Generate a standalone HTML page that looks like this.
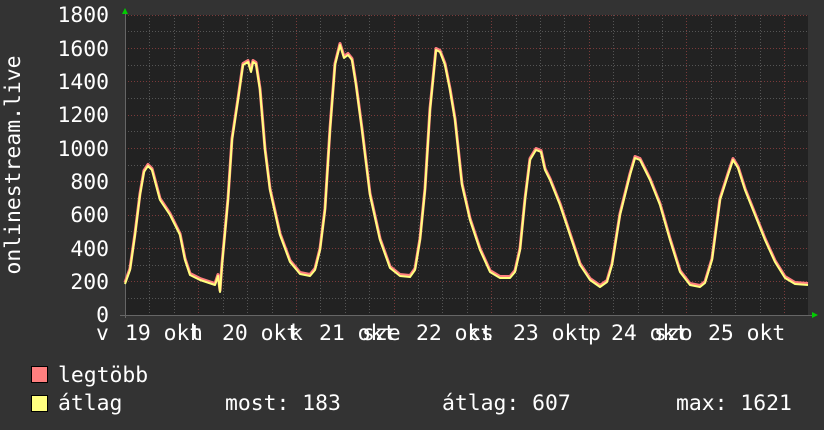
<!DOCTYPE html>
<html><head><meta charset="utf-8"><style>html,body{margin:0;padding:0;background:#333}svg{display:block}text{font-family:"DejaVu Sans Mono","Liberation Mono",monospace;fill:#fff;font-size:21.4px}</style></head><body>
<svg width="824" height="430" viewBox="0 0 824 430" xmlns="http://www.w3.org/2000/svg">
<rect width="824" height="430" fill="#333"/>
<rect x="125" y="15" width="683" height="300" fill="#222"/>
<g stroke-width="1" stroke-dasharray="1,2">
<g stroke="#555">
<path d="M125 31.5H808M125 65.5H808M125 98.5H808M125 131.5H808M125 165.5H808M125 198.5H808M125 231.5H808M125 265.5H808M125 298.5H808"/>
<path d="M149.5 15V315M174.5 15V315M223.5 15V315M247.5 15V315M272.5 15V315M320.5 15V315M345.5 15V315M369.5 15V315M418.5 15V315M442.5 15V315M467.5 15V315M516.5 15V315M540.5 15V315M564.5 15V315M613.5 15V315M638.5 15V315M662.5 15V315M711.5 15V315M735.5 15V315M760.5 15V315"/>
</g>
<g stroke="#7a3a3a">
<path d="M125 15.5H808M125 48.5H808M125 81.5H808M125 115.5H808M125 148.5H808M125 181.5H808M125 215.5H808M125 248.5H808M125 281.5H808"/>
<path d="M198.5 15V315M296.5 15V315M394.5 15V315M491.5 15V315M589.5 15V315M686.5 15V315M784.5 15V315"/>
</g>
</g>
<path d="M120 315.5H812" stroke="#666"/>
<path d="M125.5 12V318" stroke="#666"/>
<polygon points="122,14 128,14 125,8" fill="#0c0"/>
<polygon points="812,312 812,318 818,315" fill="#0c0"/>
<g fill="none" stroke-linejoin="round">
<polyline stroke="#ff7f7f" stroke-width="3" transform="translate(0,-1.5)" points="125,284 130,270 135,235 140,195 144,172 148,166 152,170 156,185 160,200 170,215 180,235 185,260 190,275 200,280 215,285 218,276 220,292 222,265 228,200 232,140 238,100 243,65 248,62 251,72 253,62 256,64 260,90 265,150 270,190 280,235 290,262 300,274 310,276 315,270 320,250 325,210 330,130 335,65 340,45 344,58 348,55 352,60 356,85 362,130 370,195 380,240 390,268 400,276 410,277 415,270 420,240 425,190 430,110 436,50 440,52 445,65 450,90 455,120 462,185 470,220 480,250 490,272 500,278 510,278 515,272 520,250 525,200 530,160 536,150 541,152 545,170 550,180 560,205 570,235 580,265 590,280 600,287 607,282 612,265 620,215 630,175 635,158 640,160 650,180 660,205 670,240 680,272 690,285 700,287 705,283 712,260 720,200 728,175 733,160 738,168 745,190 755,215 765,240 775,262 785,278 795,284 808,285"/>
<polyline stroke="#ffff7f" stroke-width="2" points="125,284 130,270 135,235 140,195 144,172 148,166 152,170 156,185 160,200 170,215 180,235 185,260 190,275 200,280 215,285 218,276 220,292 222,265 228,200 232,140 238,100 243,65 248,62 251,72 253,62 256,64 260,90 265,150 270,190 280,235 290,262 300,274 310,276 315,270 320,250 325,210 330,130 335,65 340,45 344,58 348,55 352,60 356,85 362,130 370,195 380,240 390,268 400,276 410,277 415,270 420,240 425,190 430,110 436,50 440,52 445,65 450,90 455,120 462,185 470,220 480,250 490,272 500,278 510,278 515,272 520,250 525,200 530,160 536,150 541,152 545,170 550,180 560,205 570,235 580,265 590,280 600,287 607,282 612,265 620,215 630,175 635,158 640,160 650,180 660,205 670,240 680,272 690,285 700,287 705,283 712,260 720,200 728,175 733,160 738,168 745,190 755,215 765,240 775,262 785,278 795,284 808,285"/>
</g>
<g text-anchor="end">
<text x="109" y="22">1800</text><text x="109" y="56">1600</text><text x="109" y="89">1400</text><text x="109" y="122">1200</text><text x="109" y="156">1000</text><text x="109" y="189">800</text><text x="109" y="222">600</text><text x="109" y="256">400</text><text x="109" y="289">200</text><text x="109" y="322">0</text>
</g>
<text transform="translate(20,165) rotate(-90)" text-anchor="middle">onlinestream.live</text>
<g>
<text x="96" y="340">v</text><text x="125" y="340">19 okt</text>
<text x="190" y="340">h</text><text x="222" y="340">20 okt</text>
<text x="290" y="340">k</text><text x="319" y="340">21 okt</text>
<text x="362" y="340">sze</text><text x="416" y="340">22 okt</text>
<text x="468" y="340">cs</text><text x="513" y="340">23 okt</text>
<text x="588" y="340">p</text><text x="611" y="340">24 okt</text>
<text x="654" y="340">szo</text><text x="708" y="340">25 okt</text>
</g>
<rect x="31.5" y="366.5" width="16" height="16" fill="#ff7f7f" stroke="#000"/>
<rect x="31.5" y="395.5" width="16" height="16" fill="#ffff7f" stroke="#000"/>
<text x="58" y="382">legtöbb</text>
<text x="58" y="410">átlag</text>
<text x="225" y="410">most: 183</text>
<text x="442" y="410">átlag: 607</text>
<text x="676" y="410">max: 1621</text>
</svg>
</body></html>
